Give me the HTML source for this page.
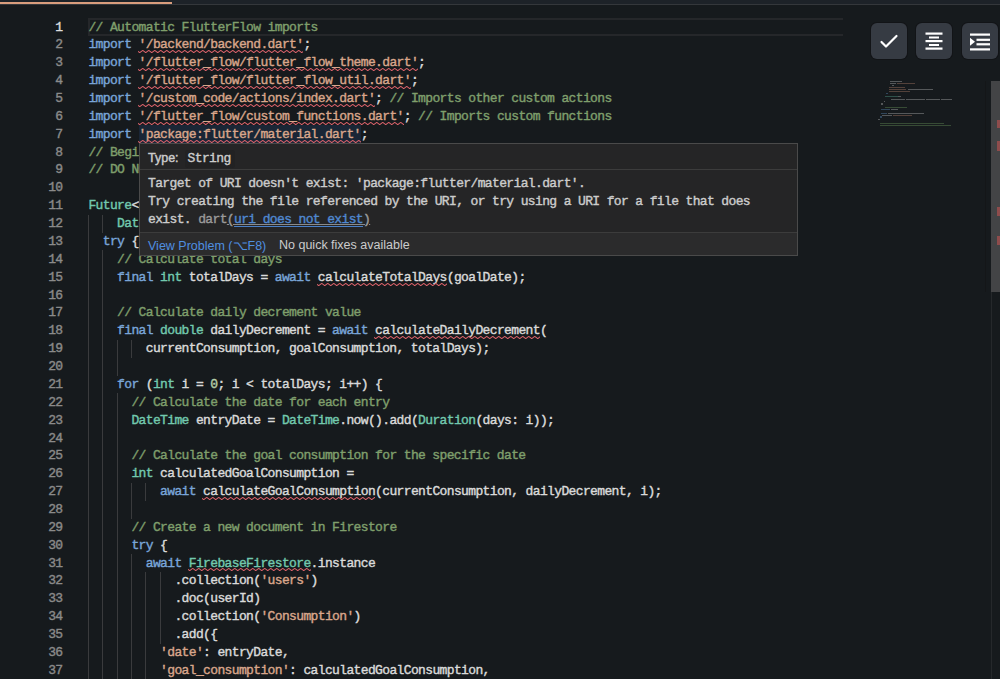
<!DOCTYPE html>
<html><head><meta charset="utf-8"><style>
*{margin:0;padding:0;box-sizing:border-box}
html,body{width:1000px;height:679px;overflow:hidden;background:#161a1d}
body{position:relative;font-family:"Liberation Mono",monospace}
.mono{font-family:"Liberation Mono",monospace;font-size:13px;letter-spacing:-0.635px;line-height:17.87px;white-space:pre;-webkit-text-stroke:0.4px currentColor}
.ln{position:absolute;left:0;width:62.5px;text-align:right;color:#858585;height:17.87px;padding-top:0.5px}
.l{position:absolute;left:88.4px;color:#dadada;height:17.87px;padding-top:0.5px}
.k{color:#79a5d8}.t{color:#72c9ae}.s{color:#d9a68b}.c{color:#7f9f6c}.n{color:#b5cea8}.d{color:#dadada}
.g{position:absolute;width:1px;background:#3a3b3d}
#top{position:absolute;left:0;top:0;width:1000px;height:4px;background:#1d2228}
#topline{position:absolute;left:0;top:4px;width:1000px;height:1px;background:#34373b}
#orange{position:absolute;left:0;top:1.5px;width:171.5px;height:2.7px;background:#d99d7d}
#cur{position:absolute;left:88px;top:18px;width:755px;height:18px;border:2px solid #25272a;border-right:none}
.hl{position:absolute;background:#1a2636}
.btn{position:absolute;top:22.5px;width:36px;height:36px;border-radius:6px;background:#363b43;box-shadow:0 0 0 1px #121417}
#hover{position:absolute;left:139px;top:143px;width:659px;height:113px;background:#252526;border:1px solid #4a4a4a}
#hover .m{position:absolute;left:8px;color:#cccccc}
#hover .sep{position:absolute;left:0;width:657px;height:1px;background:#3c3c3c}
#hover .bar{position:absolute;left:0;top:88px;width:657px;height:23px;background:#2b2b2c}
#hover .p{position:absolute;font-family:"Liberation Sans",sans-serif;font-size:12.5px;white-space:pre}
</style></head><body>
<div id="top"></div><div id="topline"></div><div id="orange"></div>
<div id="cur"></div>
<div class="hl" style="left:138.56px;top:125.22px;width:222.12px;height:17.87px"></div>
<div class="g" style="left:88px;top:214.57px;height:18.17px"></div>
<div class="g" style="left:102px;top:214.57px;height:18.17px"></div>
<div class="g" style="left:88px;top:232.44px;height:18.17px"></div>
<div class="g" style="left:88px;top:250.31px;height:18.17px"></div>
<div class="g" style="left:102px;top:250.31px;height:18.17px"></div>
<div class="g" style="left:88px;top:268.18px;height:18.17px"></div>
<div class="g" style="left:102px;top:268.18px;height:18.17px"></div>
<div class="g" style="left:88px;top:286.05px;height:18.17px"></div>
<div class="g" style="left:102px;top:286.05px;height:18.17px"></div>
<div class="g" style="left:88px;top:303.92px;height:18.17px"></div>
<div class="g" style="left:102px;top:303.92px;height:18.17px"></div>
<div class="g" style="left:88px;top:321.79px;height:18.17px"></div>
<div class="g" style="left:102px;top:321.79px;height:18.17px"></div>
<div class="g" style="left:88px;top:339.66px;height:18.17px"></div>
<div class="g" style="left:102px;top:339.66px;height:18.17px"></div>
<div class="g" style="left:117px;top:339.66px;height:18.17px"></div>
<div class="g" style="left:131px;top:339.66px;height:18.17px"></div>
<div class="g" style="left:88px;top:357.53px;height:18.17px"></div>
<div class="g" style="left:102px;top:357.53px;height:18.17px"></div>
<div class="g" style="left:117px;top:357.53px;height:18.17px"></div>
<div class="g" style="left:88px;top:375.40px;height:18.17px"></div>
<div class="g" style="left:102px;top:375.40px;height:18.17px"></div>
<div class="g" style="left:88px;top:393.27px;height:18.17px"></div>
<div class="g" style="left:102px;top:393.27px;height:18.17px"></div>
<div class="g" style="left:117px;top:393.27px;height:18.17px"></div>
<div class="g" style="left:88px;top:411.14px;height:18.17px"></div>
<div class="g" style="left:102px;top:411.14px;height:18.17px"></div>
<div class="g" style="left:117px;top:411.14px;height:18.17px"></div>
<div class="g" style="left:88px;top:429.01px;height:18.17px"></div>
<div class="g" style="left:102px;top:429.01px;height:18.17px"></div>
<div class="g" style="left:117px;top:429.01px;height:18.17px"></div>
<div class="g" style="left:88px;top:446.88px;height:18.17px"></div>
<div class="g" style="left:102px;top:446.88px;height:18.17px"></div>
<div class="g" style="left:117px;top:446.88px;height:18.17px"></div>
<div class="g" style="left:88px;top:464.75px;height:18.17px"></div>
<div class="g" style="left:102px;top:464.75px;height:18.17px"></div>
<div class="g" style="left:117px;top:464.75px;height:18.17px"></div>
<div class="g" style="left:88px;top:482.62px;height:18.17px"></div>
<div class="g" style="left:102px;top:482.62px;height:18.17px"></div>
<div class="g" style="left:117px;top:482.62px;height:18.17px"></div>
<div class="g" style="left:131px;top:482.62px;height:18.17px"></div>
<div class="g" style="left:145px;top:482.62px;height:18.17px"></div>
<div class="g" style="left:88px;top:500.49px;height:18.17px"></div>
<div class="g" style="left:102px;top:500.49px;height:18.17px"></div>
<div class="g" style="left:117px;top:500.49px;height:18.17px"></div>
<div class="g" style="left:131px;top:500.49px;height:18.17px"></div>
<div class="g" style="left:88px;top:518.36px;height:18.17px"></div>
<div class="g" style="left:102px;top:518.36px;height:18.17px"></div>
<div class="g" style="left:117px;top:518.36px;height:18.17px"></div>
<div class="g" style="left:88px;top:536.23px;height:18.17px"></div>
<div class="g" style="left:102px;top:536.23px;height:18.17px"></div>
<div class="g" style="left:117px;top:536.23px;height:18.17px"></div>
<div class="g" style="left:88px;top:554.10px;height:18.17px"></div>
<div class="g" style="left:102px;top:554.10px;height:18.17px"></div>
<div class="g" style="left:117px;top:554.10px;height:18.17px"></div>
<div class="g" style="left:131px;top:554.10px;height:18.17px"></div>
<div class="g" style="left:88px;top:571.97px;height:18.17px"></div>
<div class="g" style="left:102px;top:571.97px;height:18.17px"></div>
<div class="g" style="left:117px;top:571.97px;height:18.17px"></div>
<div class="g" style="left:131px;top:571.97px;height:18.17px"></div>
<div class="g" style="left:145px;top:571.97px;height:18.17px"></div>
<div class="g" style="left:160px;top:571.97px;height:18.17px"></div>
<div class="g" style="left:88px;top:589.84px;height:18.17px"></div>
<div class="g" style="left:102px;top:589.84px;height:18.17px"></div>
<div class="g" style="left:117px;top:589.84px;height:18.17px"></div>
<div class="g" style="left:131px;top:589.84px;height:18.17px"></div>
<div class="g" style="left:145px;top:589.84px;height:18.17px"></div>
<div class="g" style="left:160px;top:589.84px;height:18.17px"></div>
<div class="g" style="left:88px;top:607.71px;height:18.17px"></div>
<div class="g" style="left:102px;top:607.71px;height:18.17px"></div>
<div class="g" style="left:117px;top:607.71px;height:18.17px"></div>
<div class="g" style="left:131px;top:607.71px;height:18.17px"></div>
<div class="g" style="left:145px;top:607.71px;height:18.17px"></div>
<div class="g" style="left:160px;top:607.71px;height:18.17px"></div>
<div class="g" style="left:88px;top:625.58px;height:18.17px"></div>
<div class="g" style="left:102px;top:625.58px;height:18.17px"></div>
<div class="g" style="left:117px;top:625.58px;height:18.17px"></div>
<div class="g" style="left:131px;top:625.58px;height:18.17px"></div>
<div class="g" style="left:145px;top:625.58px;height:18.17px"></div>
<div class="g" style="left:160px;top:625.58px;height:18.17px"></div>
<div class="g" style="left:88px;top:643.45px;height:18.17px"></div>
<div class="g" style="left:102px;top:643.45px;height:18.17px"></div>
<div class="g" style="left:117px;top:643.45px;height:18.17px"></div>
<div class="g" style="left:131px;top:643.45px;height:18.17px"></div>
<div class="g" style="left:145px;top:643.45px;height:18.17px"></div>
<div class="g" style="left:88px;top:661.32px;height:18.17px"></div>
<div class="g" style="left:102px;top:661.32px;height:18.17px"></div>
<div class="g" style="left:117px;top:661.32px;height:18.17px"></div>
<div class="g" style="left:131px;top:661.32px;height:18.17px"></div>
<div class="g" style="left:145px;top:661.32px;height:18.17px"></div>
<div class="ln mono" style="top:18.00px;color:#dedede">1</div>
<div class="l mono" style="top:18.00px"><span class="c">// Automatic FlutterFlow imports</span></div>
<div class="ln mono" style="top:35.87px;color:#8a8a8a">2</div>
<div class="l mono" style="top:35.87px"><span class="k">import</span><span class="d"> </span><span class="s">&#x27;/backend/backend.dart&#x27;</span><span class="d">;</span></div>
<div class="ln mono" style="top:53.74px;color:#8a8a8a">3</div>
<div class="l mono" style="top:53.74px"><span class="k">import</span><span class="d"> </span><span class="s">&#x27;/flutter_flow/flutter_flow_theme.dart&#x27;</span><span class="d">;</span></div>
<div class="ln mono" style="top:71.61px;color:#8a8a8a">4</div>
<div class="l mono" style="top:71.61px"><span class="k">import</span><span class="d"> </span><span class="s">&#x27;/flutter_flow/flutter_flow_util.dart&#x27;</span><span class="d">;</span></div>
<div class="ln mono" style="top:89.48px;color:#8a8a8a">5</div>
<div class="l mono" style="top:89.48px"><span class="k">import</span><span class="d"> </span><span class="s">&#x27;/custom_code/actions/index.dart&#x27;</span><span class="d">; </span><span class="c">// Imports other custom actions</span></div>
<div class="ln mono" style="top:107.35px;color:#8a8a8a">6</div>
<div class="l mono" style="top:107.35px"><span class="k">import</span><span class="d"> </span><span class="s">&#x27;/flutter_flow/custom_functions.dart&#x27;</span><span class="d">; </span><span class="c">// Imports custom functions</span></div>
<div class="ln mono" style="top:125.22px;color:#8a8a8a">7</div>
<div class="l mono" style="top:125.22px"><span class="k">import</span><span class="d"> </span><span class="s">&#x27;package:flutter/material.dart&#x27;</span><span class="d">;</span></div>
<div class="ln mono" style="top:143.09px;color:#8a8a8a">8</div>
<div class="l mono" style="top:143.09px"><span class="c">// Begin custom action code</span></div>
<div class="ln mono" style="top:160.96px;color:#8a8a8a">9</div>
<div class="l mono" style="top:160.96px"><span class="c">// DO NOT REMOVE OR MODIFY THE CODE ABOVE!</span></div>
<div class="ln mono" style="top:178.83px;color:#8a8a8a">10</div>
<div class="l mono" style="top:178.83px"></div>
<div class="ln mono" style="top:196.70px;color:#8a8a8a">11</div>
<div class="l mono" style="top:196.70px"><span class="t">Future</span><span class="d">&lt;</span><span class="k">void</span><span class="d">&gt; addGoalConsumption(</span></div>
<div class="ln mono" style="top:214.57px;color:#8a8a8a">12</div>
<div class="l mono" style="top:214.57px"><span class="d">    </span><span class="t">DateTime</span><span class="d"> goalDate, </span><span class="t">int</span><span class="d"> currentConsumption) </span><span class="k">async</span><span class="d"> {</span></div>
<div class="ln mono" style="top:232.44px;color:#8a8a8a">13</div>
<div class="l mono" style="top:232.44px"><span class="d">  </span><span class="k">try</span><span class="d"> {</span></div>
<div class="ln mono" style="top:250.31px;color:#8a8a8a">14</div>
<div class="l mono" style="top:250.31px"><span class="d">    </span><span class="c">// Calculate total days</span></div>
<div class="ln mono" style="top:268.18px;color:#8a8a8a">15</div>
<div class="l mono" style="top:268.18px"><span class="d">    </span><span class="k">final</span><span class="d"> </span><span class="t">int</span><span class="d"> totalDays = </span><span class="k">await</span><span class="d"> </span><span class="d">calculateTotalDays</span><span class="d">(goalDate);</span></div>
<div class="ln mono" style="top:286.05px;color:#8a8a8a">16</div>
<div class="l mono" style="top:286.05px"></div>
<div class="ln mono" style="top:303.92px;color:#8a8a8a">17</div>
<div class="l mono" style="top:303.92px"><span class="d">    </span><span class="c">// Calculate daily decrement value</span></div>
<div class="ln mono" style="top:321.79px;color:#8a8a8a">18</div>
<div class="l mono" style="top:321.79px"><span class="d">    </span><span class="k">final</span><span class="d"> </span><span class="t">double</span><span class="d"> dailyDecrement = </span><span class="k">await</span><span class="d"> </span><span class="d">calculateDailyDecrement</span><span class="d">(</span></div>
<div class="ln mono" style="top:339.66px;color:#8a8a8a">19</div>
<div class="l mono" style="top:339.66px"><span class="d">        currentConsumption, goalConsumption, totalDays);</span></div>
<div class="ln mono" style="top:357.53px;color:#8a8a8a">20</div>
<div class="l mono" style="top:357.53px"></div>
<div class="ln mono" style="top:375.40px;color:#8a8a8a">21</div>
<div class="l mono" style="top:375.40px"><span class="d">    </span><span class="k">for</span><span class="d"> (</span><span class="t">int</span><span class="d"> i = </span><span class="n">0</span><span class="d">; i &lt; totalDays; i++) {</span></div>
<div class="ln mono" style="top:393.27px;color:#8a8a8a">22</div>
<div class="l mono" style="top:393.27px"><span class="d">      </span><span class="c">// Calculate the date for each entry</span></div>
<div class="ln mono" style="top:411.14px;color:#8a8a8a">23</div>
<div class="l mono" style="top:411.14px"><span class="d">      </span><span class="t">DateTime</span><span class="d"> entryDate = </span><span class="t">DateTime</span><span class="d">.now().add(</span><span class="t">Duration</span><span class="d">(days: i));</span></div>
<div class="ln mono" style="top:429.01px;color:#8a8a8a">24</div>
<div class="l mono" style="top:429.01px"></div>
<div class="ln mono" style="top:446.88px;color:#8a8a8a">25</div>
<div class="l mono" style="top:446.88px"><span class="d">      </span><span class="c">// Calculate the goal consumption for the specific date</span></div>
<div class="ln mono" style="top:464.75px;color:#8a8a8a">26</div>
<div class="l mono" style="top:464.75px"><span class="d">      </span><span class="t">int</span><span class="d"> calculatedGoalConsumption =</span></div>
<div class="ln mono" style="top:482.62px;color:#8a8a8a">27</div>
<div class="l mono" style="top:482.62px"><span class="d">          </span><span class="k">await</span><span class="d"> </span><span class="d">calculateGoalConsumption</span><span class="d">(currentConsumption, dailyDecrement, i);</span></div>
<div class="ln mono" style="top:500.49px;color:#8a8a8a">28</div>
<div class="l mono" style="top:500.49px"></div>
<div class="ln mono" style="top:518.36px;color:#8a8a8a">29</div>
<div class="l mono" style="top:518.36px"><span class="d">      </span><span class="c">// Create a new document in Firestore</span></div>
<div class="ln mono" style="top:536.23px;color:#8a8a8a">30</div>
<div class="l mono" style="top:536.23px"><span class="d">      </span><span class="k">try</span><span class="d"> {</span></div>
<div class="ln mono" style="top:554.10px;color:#8a8a8a">31</div>
<div class="l mono" style="top:554.10px"><span class="d">        </span><span class="k">await</span><span class="d"> </span><span class="t">FirebaseFirestore</span><span class="d">.instance</span></div>
<div class="ln mono" style="top:571.97px;color:#8a8a8a">32</div>
<div class="l mono" style="top:571.97px"><span class="d">            .collection(</span><span class="s">&#x27;users&#x27;</span><span class="d">)</span></div>
<div class="ln mono" style="top:589.84px;color:#8a8a8a">33</div>
<div class="l mono" style="top:589.84px"><span class="d">            .doc(userId)</span></div>
<div class="ln mono" style="top:607.71px;color:#8a8a8a">34</div>
<div class="l mono" style="top:607.71px"><span class="d">            .collection(</span><span class="s">&#x27;Consumption&#x27;</span><span class="d">)</span></div>
<div class="ln mono" style="top:625.58px;color:#8a8a8a">35</div>
<div class="l mono" style="top:625.58px"><span class="d">            .add({</span></div>
<div class="ln mono" style="top:643.45px;color:#8a8a8a">36</div>
<div class="l mono" style="top:643.45px"><span class="d">          </span><span class="s">&#x27;date&#x27;</span><span class="d">: entryDate,</span></div>
<div class="ln mono" style="top:661.32px;color:#8a8a8a">37</div>
<div class="l mono" style="top:661.32px"><span class="d">          </span><span class="s">&#x27;goal_consumption&#x27;</span><span class="d">: calculatedGoalConsumption,</span></div>
<svg style="position:absolute;left:137.75px;top:50.00px;overflow:hidden" width="165.59" height="3"><polyline points="-4.25,2.6 -1.25,0.4 1.75,2.6 4.75,0.4 7.75,2.6 10.75,0.4 13.75,2.6 16.75,0.4 19.75,2.6 22.75,0.4 25.75,2.6 28.75,0.4 31.75,2.6 34.75,0.4 37.75,2.6 40.75,0.4 43.75,2.6 46.75,0.4 49.75,2.6 52.75,0.4 55.75,2.6 58.75,0.4 61.75,2.6 64.75,0.4 67.75,2.6 70.75,0.4 73.75,2.6 76.75,0.4 79.75,2.6 82.75,0.4 85.75,2.6 88.75,0.4 91.75,2.6 94.75,0.4 97.75,2.6 100.75,0.4 103.75,2.6 106.75,0.4 109.75,2.6 112.75,0.4 115.75,2.6 118.75,0.4 121.75,2.6 124.75,0.4 127.75,2.6 130.75,0.4 133.75,2.6 136.75,0.4 139.75,2.6 142.75,0.4 145.75,2.6 148.75,0.4 151.75,2.6 154.75,0.4 157.75,2.6 160.75,0.4 163.75,2.6 166.75,0.4 169.75,2.6 172.75,0.4" fill="none" stroke="#d9626a" stroke-width="1.05"/></svg><svg style="position:absolute;left:137.75px;top:68.00px;overflow:hidden" width="280.24" height="3"><polyline points="-4.25,2.6 -1.25,0.4 1.75,2.6 4.75,0.4 7.75,2.6 10.75,0.4 13.75,2.6 16.75,0.4 19.75,2.6 22.75,0.4 25.75,2.6 28.75,0.4 31.75,2.6 34.75,0.4 37.75,2.6 40.75,0.4 43.75,2.6 46.75,0.4 49.75,2.6 52.75,0.4 55.75,2.6 58.75,0.4 61.75,2.6 64.75,0.4 67.75,2.6 70.75,0.4 73.75,2.6 76.75,0.4 79.75,2.6 82.75,0.4 85.75,2.6 88.75,0.4 91.75,2.6 94.75,0.4 97.75,2.6 100.75,0.4 103.75,2.6 106.75,0.4 109.75,2.6 112.75,0.4 115.75,2.6 118.75,0.4 121.75,2.6 124.75,0.4 127.75,2.6 130.75,0.4 133.75,2.6 136.75,0.4 139.75,2.6 142.75,0.4 145.75,2.6 148.75,0.4 151.75,2.6 154.75,0.4 157.75,2.6 160.75,0.4 163.75,2.6 166.75,0.4 169.75,2.6 172.75,0.4 175.75,2.6 178.75,0.4 181.75,2.6 184.75,0.4 187.75,2.6 190.75,0.4 193.75,2.6 196.75,0.4 199.75,2.6 202.75,0.4 205.75,2.6 208.75,0.4 211.75,2.6 214.75,0.4 217.75,2.6 220.75,0.4 223.75,2.6 226.75,0.4 229.75,2.6 232.75,0.4 235.75,2.6 238.75,0.4 241.75,2.6 244.75,0.4 247.75,2.6 250.75,0.4 253.75,2.6 256.75,0.4 259.75,2.6 262.75,0.4 265.75,2.6 268.75,0.4 271.75,2.6 274.75,0.4 277.75,2.6 280.75,0.4 283.75,2.6 286.75,0.4" fill="none" stroke="#d9626a" stroke-width="1.05"/></svg><svg style="position:absolute;left:137.75px;top:86.00px;overflow:hidden" width="273.07" height="3"><polyline points="-4.25,2.6 -1.25,0.4 1.75,2.6 4.75,0.4 7.75,2.6 10.75,0.4 13.75,2.6 16.75,0.4 19.75,2.6 22.75,0.4 25.75,2.6 28.75,0.4 31.75,2.6 34.75,0.4 37.75,2.6 40.75,0.4 43.75,2.6 46.75,0.4 49.75,2.6 52.75,0.4 55.75,2.6 58.75,0.4 61.75,2.6 64.75,0.4 67.75,2.6 70.75,0.4 73.75,2.6 76.75,0.4 79.75,2.6 82.75,0.4 85.75,2.6 88.75,0.4 91.75,2.6 94.75,0.4 97.75,2.6 100.75,0.4 103.75,2.6 106.75,0.4 109.75,2.6 112.75,0.4 115.75,2.6 118.75,0.4 121.75,2.6 124.75,0.4 127.75,2.6 130.75,0.4 133.75,2.6 136.75,0.4 139.75,2.6 142.75,0.4 145.75,2.6 148.75,0.4 151.75,2.6 154.75,0.4 157.75,2.6 160.75,0.4 163.75,2.6 166.75,0.4 169.75,2.6 172.75,0.4 175.75,2.6 178.75,0.4 181.75,2.6 184.75,0.4 187.75,2.6 190.75,0.4 193.75,2.6 196.75,0.4 199.75,2.6 202.75,0.4 205.75,2.6 208.75,0.4 211.75,2.6 214.75,0.4 217.75,2.6 220.75,0.4 223.75,2.6 226.75,0.4 229.75,2.6 232.75,0.4 235.75,2.6 238.75,0.4 241.75,2.6 244.75,0.4 247.75,2.6 250.75,0.4 253.75,2.6 256.75,0.4 259.75,2.6 262.75,0.4 265.75,2.6 268.75,0.4 271.75,2.6 274.75,0.4 277.75,2.6 280.75,0.4" fill="none" stroke="#d9626a" stroke-width="1.05"/></svg><svg style="position:absolute;left:137.75px;top:104.00px;overflow:hidden" width="237.25" height="3"><polyline points="-4.25,2.6 -1.25,0.4 1.75,2.6 4.75,0.4 7.75,2.6 10.75,0.4 13.75,2.6 16.75,0.4 19.75,2.6 22.75,0.4 25.75,2.6 28.75,0.4 31.75,2.6 34.75,0.4 37.75,2.6 40.75,0.4 43.75,2.6 46.75,0.4 49.75,2.6 52.75,0.4 55.75,2.6 58.75,0.4 61.75,2.6 64.75,0.4 67.75,2.6 70.75,0.4 73.75,2.6 76.75,0.4 79.75,2.6 82.75,0.4 85.75,2.6 88.75,0.4 91.75,2.6 94.75,0.4 97.75,2.6 100.75,0.4 103.75,2.6 106.75,0.4 109.75,2.6 112.75,0.4 115.75,2.6 118.75,0.4 121.75,2.6 124.75,0.4 127.75,2.6 130.75,0.4 133.75,2.6 136.75,0.4 139.75,2.6 142.75,0.4 145.75,2.6 148.75,0.4 151.75,2.6 154.75,0.4 157.75,2.6 160.75,0.4 163.75,2.6 166.75,0.4 169.75,2.6 172.75,0.4 175.75,2.6 178.75,0.4 181.75,2.6 184.75,0.4 187.75,2.6 190.75,0.4 193.75,2.6 196.75,0.4 199.75,2.6 202.75,0.4 205.75,2.6 208.75,0.4 211.75,2.6 214.75,0.4 217.75,2.6 220.75,0.4 223.75,2.6 226.75,0.4 229.75,2.6 232.75,0.4 235.75,2.6 238.75,0.4 241.75,2.6 244.75,0.4" fill="none" stroke="#d9626a" stroke-width="1.05"/></svg><svg style="position:absolute;left:137.75px;top:122.00px;overflow:hidden" width="265.91" height="3"><polyline points="-4.25,2.6 -1.25,0.4 1.75,2.6 4.75,0.4 7.75,2.6 10.75,0.4 13.75,2.6 16.75,0.4 19.75,2.6 22.75,0.4 25.75,2.6 28.75,0.4 31.75,2.6 34.75,0.4 37.75,2.6 40.75,0.4 43.75,2.6 46.75,0.4 49.75,2.6 52.75,0.4 55.75,2.6 58.75,0.4 61.75,2.6 64.75,0.4 67.75,2.6 70.75,0.4 73.75,2.6 76.75,0.4 79.75,2.6 82.75,0.4 85.75,2.6 88.75,0.4 91.75,2.6 94.75,0.4 97.75,2.6 100.75,0.4 103.75,2.6 106.75,0.4 109.75,2.6 112.75,0.4 115.75,2.6 118.75,0.4 121.75,2.6 124.75,0.4 127.75,2.6 130.75,0.4 133.75,2.6 136.75,0.4 139.75,2.6 142.75,0.4 145.75,2.6 148.75,0.4 151.75,2.6 154.75,0.4 157.75,2.6 160.75,0.4 163.75,2.6 166.75,0.4 169.75,2.6 172.75,0.4 175.75,2.6 178.75,0.4 181.75,2.6 184.75,0.4 187.75,2.6 190.75,0.4 193.75,2.6 196.75,0.4 199.75,2.6 202.75,0.4 205.75,2.6 208.75,0.4 211.75,2.6 214.75,0.4 217.75,2.6 220.75,0.4 223.75,2.6 226.75,0.4 229.75,2.6 232.75,0.4 235.75,2.6 238.75,0.4 241.75,2.6 244.75,0.4 247.75,2.6 250.75,0.4 253.75,2.6 256.75,0.4 259.75,2.6 262.75,0.4 265.75,2.6 268.75,0.4 271.75,2.6 274.75,0.4" fill="none" stroke="#d9626a" stroke-width="1.05"/></svg><svg style="position:absolute;left:137.75px;top:140.00px;overflow:hidden" width="222.92" height="3"><polyline points="-4.25,2.6 -1.25,0.4 1.75,2.6 4.75,0.4 7.75,2.6 10.75,0.4 13.75,2.6 16.75,0.4 19.75,2.6 22.75,0.4 25.75,2.6 28.75,0.4 31.75,2.6 34.75,0.4 37.75,2.6 40.75,0.4 43.75,2.6 46.75,0.4 49.75,2.6 52.75,0.4 55.75,2.6 58.75,0.4 61.75,2.6 64.75,0.4 67.75,2.6 70.75,0.4 73.75,2.6 76.75,0.4 79.75,2.6 82.75,0.4 85.75,2.6 88.75,0.4 91.75,2.6 94.75,0.4 97.75,2.6 100.75,0.4 103.75,2.6 106.75,0.4 109.75,2.6 112.75,0.4 115.75,2.6 118.75,0.4 121.75,2.6 124.75,0.4 127.75,2.6 130.75,0.4 133.75,2.6 136.75,0.4 139.75,2.6 142.75,0.4 145.75,2.6 148.75,0.4 151.75,2.6 154.75,0.4 157.75,2.6 160.75,0.4 163.75,2.6 166.75,0.4 169.75,2.6 172.75,0.4 175.75,2.6 178.75,0.4 181.75,2.6 184.75,0.4 187.75,2.6 190.75,0.4 193.75,2.6 196.75,0.4 199.75,2.6 202.75,0.4 205.75,2.6 208.75,0.4 211.75,2.6 214.75,0.4 217.75,2.6 220.75,0.4 223.75,2.6 226.75,0.4 229.75,2.6 232.75,0.4" fill="none" stroke="#d9626a" stroke-width="1.05"/></svg><svg style="position:absolute;left:316.88px;top:283.00px;overflow:hidden" width="129.77" height="3"><polyline points="-4.25,2.6 -1.25,0.4 1.75,2.6 4.75,0.4 7.75,2.6 10.75,0.4 13.75,2.6 16.75,0.4 19.75,2.6 22.75,0.4 25.75,2.6 28.75,0.4 31.75,2.6 34.75,0.4 37.75,2.6 40.75,0.4 43.75,2.6 46.75,0.4 49.75,2.6 52.75,0.4 55.75,2.6 58.75,0.4 61.75,2.6 64.75,0.4 67.75,2.6 70.75,0.4 73.75,2.6 76.75,0.4 79.75,2.6 82.75,0.4 85.75,2.6 88.75,0.4 91.75,2.6 94.75,0.4 97.75,2.6 100.75,0.4 103.75,2.6 106.75,0.4 109.75,2.6 112.75,0.4 115.75,2.6 118.75,0.4 121.75,2.6 124.75,0.4 127.75,2.6 130.75,0.4 133.75,2.6 136.75,0.4" fill="none" stroke="#d9626a" stroke-width="1.05"/></svg><svg style="position:absolute;left:374.20px;top:336.00px;overflow:hidden" width="165.59" height="3"><polyline points="-4.25,2.6 -1.25,0.4 1.75,2.6 4.75,0.4 7.75,2.6 10.75,0.4 13.75,2.6 16.75,0.4 19.75,2.6 22.75,0.4 25.75,2.6 28.75,0.4 31.75,2.6 34.75,0.4 37.75,2.6 40.75,0.4 43.75,2.6 46.75,0.4 49.75,2.6 52.75,0.4 55.75,2.6 58.75,0.4 61.75,2.6 64.75,0.4 67.75,2.6 70.75,0.4 73.75,2.6 76.75,0.4 79.75,2.6 82.75,0.4 85.75,2.6 88.75,0.4 91.75,2.6 94.75,0.4 97.75,2.6 100.75,0.4 103.75,2.6 106.75,0.4 109.75,2.6 112.75,0.4 115.75,2.6 118.75,0.4 121.75,2.6 124.75,0.4 127.75,2.6 130.75,0.4 133.75,2.6 136.75,0.4 139.75,2.6 142.75,0.4 145.75,2.6 148.75,0.4 151.75,2.6 154.75,0.4 157.75,2.6 160.75,0.4 163.75,2.6 166.75,0.4 169.75,2.6 172.75,0.4" fill="none" stroke="#d9626a" stroke-width="1.05"/></svg><svg style="position:absolute;left:202.24px;top:497.00px;overflow:hidden" width="172.76" height="3"><polyline points="-4.25,2.6 -1.25,0.4 1.75,2.6 4.75,0.4 7.75,2.6 10.75,0.4 13.75,2.6 16.75,0.4 19.75,2.6 22.75,0.4 25.75,2.6 28.75,0.4 31.75,2.6 34.75,0.4 37.75,2.6 40.75,0.4 43.75,2.6 46.75,0.4 49.75,2.6 52.75,0.4 55.75,2.6 58.75,0.4 61.75,2.6 64.75,0.4 67.75,2.6 70.75,0.4 73.75,2.6 76.75,0.4 79.75,2.6 82.75,0.4 85.75,2.6 88.75,0.4 91.75,2.6 94.75,0.4 97.75,2.6 100.75,0.4 103.75,2.6 106.75,0.4 109.75,2.6 112.75,0.4 115.75,2.6 118.75,0.4 121.75,2.6 124.75,0.4 127.75,2.6 130.75,0.4 133.75,2.6 136.75,0.4 139.75,2.6 142.75,0.4 145.75,2.6 148.75,0.4 151.75,2.6 154.75,0.4 157.75,2.6 160.75,0.4 163.75,2.6 166.75,0.4 169.75,2.6 172.75,0.4 175.75,2.6 178.75,0.4 181.75,2.6 184.75,0.4" fill="none" stroke="#d9626a" stroke-width="1.05"/></svg><svg style="position:absolute;left:187.91px;top:568.00px;overflow:hidden" width="122.61" height="3"><polyline points="-4.25,2.6 -1.25,0.4 1.75,2.6 4.75,0.4 7.75,2.6 10.75,0.4 13.75,2.6 16.75,0.4 19.75,2.6 22.75,0.4 25.75,2.6 28.75,0.4 31.75,2.6 34.75,0.4 37.75,2.6 40.75,0.4 43.75,2.6 46.75,0.4 49.75,2.6 52.75,0.4 55.75,2.6 58.75,0.4 61.75,2.6 64.75,0.4 67.75,2.6 70.75,0.4 73.75,2.6 76.75,0.4 79.75,2.6 82.75,0.4 85.75,2.6 88.75,0.4 91.75,2.6 94.75,0.4 97.75,2.6 100.75,0.4 103.75,2.6 106.75,0.4 109.75,2.6 112.75,0.4 115.75,2.6 118.75,0.4 121.75,2.6 124.75,0.4 127.75,2.6 130.75,0.4" fill="none" stroke="#d9626a" stroke-width="1.05"/></svg>
<div style="position:absolute;left:890px;top:80.9px;width:11.5px;height:1.4px;background:#bdbdbd;opacity:0.38"></div><div style="position:absolute;left:890px;top:83.1px;width:6.0px;height:1.4px;background:#bdbdbd;opacity:0.38"></div><div style="position:absolute;left:897px;top:83.1px;width:18.0px;height:1.4px;background:#b98268;opacity:0.38"></div><div style="position:absolute;left:891.5px;top:84.9px;width:2.5px;height:1.4px;background:#bdbdbd;opacity:0.38"></div><div style="position:absolute;left:888.5px;top:87.1px;width:16.5px;height:1.4px;background:#b98268;opacity:0.38"></div><div style="position:absolute;left:888.5px;top:89.1px;width:17.5px;height:1.4px;background:#b98268;opacity:0.38"></div><div style="position:absolute;left:908px;top:89.1px;width:25.0px;height:1.4px;background:#bdbdbd;opacity:0.38"></div><div style="position:absolute;left:889px;top:90.8px;width:20.5px;height:1.4px;background:#b98268;opacity:0.38"></div><div style="position:absolute;left:886px;top:93.1px;width:2.0px;height:1.4px;background:#5b8ec0;opacity:0.38"></div><div style="position:absolute;left:884.5px;top:95.7px;width:13.5px;height:1.4px;background:#5aa894;opacity:0.38"></div><div style="position:absolute;left:898px;top:95.7px;width:3.0px;height:1.4px;background:#bdbdbd;opacity:0.38"></div><div style="position:absolute;left:890.5px;top:98.9px;width:14.5px;height:1.4px;background:#bdbdbd;opacity:0.38"></div><div style="position:absolute;left:906px;top:98.9px;width:19.0px;height:1.4px;background:#bdbdbd;opacity:0.38"></div><div style="position:absolute;left:926px;top:98.9px;width:14.0px;height:1.4px;background:#bdbdbd;opacity:0.38"></div><div style="position:absolute;left:941px;top:98.9px;width:11.0px;height:1.4px;background:#bdbdbd;opacity:0.38"></div><div style="position:absolute;left:883.5px;top:101.1px;width:1.5px;height:1.4px;background:#bdbdbd;opacity:0.38"></div><div style="position:absolute;left:881px;top:103.4px;width:2.0px;height:1.4px;background:#bdbdbd;opacity:0.38"></div><div style="position:absolute;left:885px;top:107.1px;width:22.0px;height:1.4px;background:#6f9a5c;opacity:0.38"></div><div style="position:absolute;left:881px;top:109.1px;width:9.0px;height:1.4px;background:#5b8ec0;opacity:0.38"></div><div style="position:absolute;left:891px;top:109.1px;width:7.0px;height:1.4px;background:#bdbdbd;opacity:0.38"></div><div style="position:absolute;left:881px;top:112.8px;width:6.0px;height:1.4px;background:#5b8ec0;opacity:0.38"></div><div style="position:absolute;left:888px;top:112.8px;width:36.0px;height:1.4px;background:#bdbdbd;opacity:0.38"></div><div style="position:absolute;left:882px;top:114.6px;width:10.0px;height:1.4px;background:#bdbdbd;opacity:0.38"></div><div style="position:absolute;left:893px;top:114.6px;width:19.0px;height:1.4px;background:#b98268;opacity:0.38"></div><div style="position:absolute;left:879.5px;top:116.4px;width:2.5px;height:1.4px;background:#5b8ec0;opacity:0.38"></div><div style="position:absolute;left:877.5px;top:118.7px;width:2.5px;height:1.4px;background:#bdbdbd;opacity:0.38"></div><div style="position:absolute;left:880px;top:123.1px;width:64.0px;height:1.4px;background:#6f9a5c;opacity:0.38"></div><div style="position:absolute;left:880px;top:125.1px;width:71.0px;height:1.4px;background:#6f9a5c;opacity:0.38"></div>
<div style="position:absolute;left:990.5px;top:292px;width:1px;height:387px;background:#25282b"></div>
<div style="position:absolute;left:985px;top:81px;width:1px;height:211px;background:#141618"></div>
<div style="position:absolute;left:991px;top:81px;width:9px;height:211px;background:#434446"></div>
<div style="position:absolute;left:997px;top:120px;width:3px;height:8px;background:#8e4c4c"></div>
<div style="position:absolute;left:997px;top:141px;width:3px;height:9.5px;background:#8e4c4c"></div>
<div style="position:absolute;left:997px;top:206.5px;width:3px;height:9.5px;background:#8e4c4c"></div>
<div style="position:absolute;left:997px;top:236px;width:3px;height:8.5px;background:#8e4c4c"></div>

<div class="btn" style="left:871px"><svg width="36" height="36" viewBox="0 0 36 36"><path d="M10.5 19 L15 23.5 L25.5 13" fill="none" stroke="#fff" stroke-width="2.2" stroke-linecap="round" stroke-linejoin="round"/></svg></div>
<div class="btn" style="left:916px"><svg width="36" height="36" viewBox="0 0 36 36" fill="#fff"><rect x="9.5" y="9.5" width="17" height="2.2"/><rect x="13" y="13.5" width="10" height="2"/><rect x="9.5" y="17" width="17" height="2.2"/><rect x="13" y="21" width="10" height="2"/><rect x="9.5" y="24.5" width="17" height="2.2"/></svg></div>
<div class="btn" style="left:962px"><svg width="36" height="36" viewBox="0 0 36 36" fill="#fff"><rect x="8" y="10.5" width="20" height="2.2"/><path d="M8 14.8 L13 18.8 L8 22.8Z"/><rect x="14.5" y="15.7" width="13.5" height="2.2"/><rect x="14.5" y="20.2" width="13.5" height="2.2"/><rect x="8" y="25.3" width="20" height="2.2"/></svg></div>
<div id="hover">
<div style="position:absolute;left:44.5px;top:6px;width:50px;height:18px;background:#222223;border-radius:3px"></div><div class="m mono" style="top:5.5px"><span style="font-family:'Liberation Sans',sans-serif;letter-spacing:0;font-size:12.5px">Type:</span><span style="padding-left:9px">String</span></div>
<div class="sep" style="top:25px"></div>
<div class="m mono" style="top:31px">Target of URI doesn't exist: 'package:flutter/material.dart'.
Try creating the file referenced by the URI, or try using a URI for a file that does
exist. <span style="color:#9a9a9a">dart</span><span style="color:#9a9a9a;text-decoration:underline;text-decoration-color:#8a8a8a">(<span style="color:#5088d0;text-decoration:underline;text-decoration-color:#4a80c8;text-underline-offset:3px">uri does not exist</span>)</span></div>
<div class="bar"></div>
<div class="sep" style="top:88px"></div>
<div class="p" style="left:8px;top:93.5px;color:#4f8fe0">View Problem (⌥F8)</div>
<div class="p" style="left:139px;top:93.5px;color:#cccccc">No quick fixes available</div>
</div>
</body></html>
